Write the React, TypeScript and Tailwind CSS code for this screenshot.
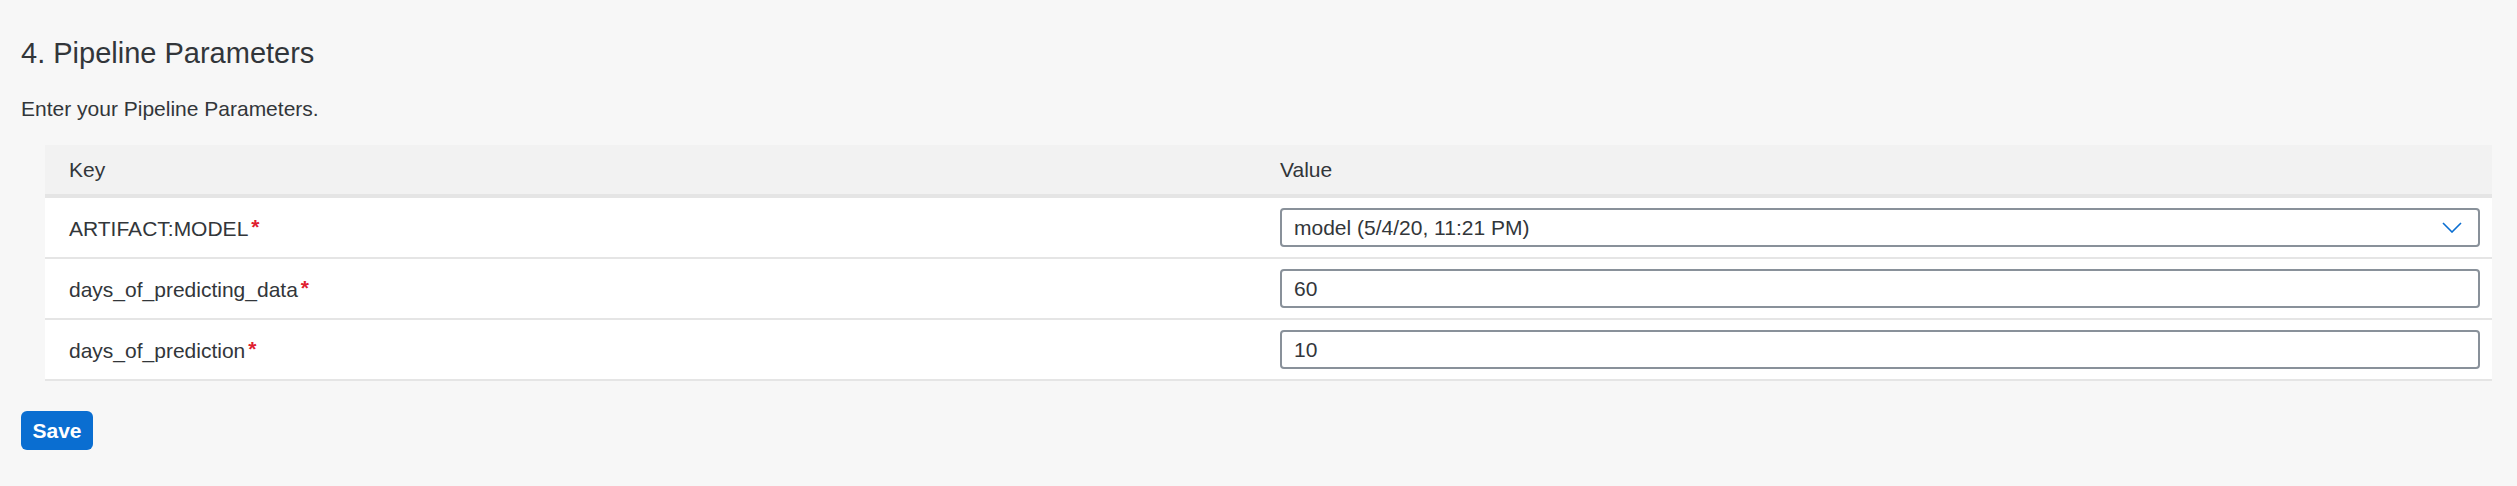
import React, { useState } from "react";

type Param = {
  key: string;
  value: string;
  kind: "select" | "input";
};

const params: Param[] = [
  { key: "ARTIFACT:MODEL", value: "model (5/4/20, 11:21 PM)", kind: "select" },
  { key: "days_of_predicting_data", value: "60", kind: "input" },
  { key: "days_of_prediction", value: "10", kind: "input" }
];

function Chevron() {
  return (
    <svg width="20" height="11" viewBox="0 0 20 11" fill="none">
      <path d="M1 1l9 9 9-9" stroke="#0a6ed1" strokeWidth="1.6" />
    </svg>
  );
}

export default function App() {
  const [values, setValues] = useState(params.map(p => p.value));

  return (
    <div className="min-h-screen bg-[#f7f7f7] px-[21px] text-[#32363a] font-['Liberation_Sans',Arial,sans-serif]">
      <h1 className="pt-[35px] text-[29px] leading-[36px] font-normal">4. Pipeline Parameters</h1>
      <p className="mt-[26px] text-[21px] leading-[24px]">Enter your Pipeline Parameters.</p>

      <div className="mt-[24px] ml-[24px] mr-[4px]">
        <div className="grid grid-cols-[1235px_1fr] h-[53px] bg-[#f2f2f2] border-b-4 border-[#e5e5e5] items-center text-[21px]">
          <div className="pl-6">Key</div>
          <div>Value</div>
        </div>

        {params.map((p, i) => (
          <div
            key={p.key}
            className="grid grid-cols-[1235px_1fr] h-[61px] bg-white border-b-2 border-[#e5e5e5] items-center text-[21px]"
          >
            <div className="pl-6">
              {p.key}
              <span className="ml-[3px] text-[#e0202f] font-bold align-[2px]">*</span>
            </div>
            <div className="pr-3">
              <div className="flex items-center h-[39px] rounded-[4px] border-2 border-[#89919a] bg-white pl-[12px] pr-[16px]">
                <input
                  className="flex-1 bg-transparent outline-none text-[21px] text-[#32363a]"
                  value={values[i]}
                  readOnly={p.kind === "select"}
                  onChange={e => setValues(prev => prev.map((v, j) => (j === i ? e.target.value : v)))}
                />
                {p.kind === "select" && <Chevron />}
              </div>
            </div>
          </div>
        ))}
      </div>

      <button className="block mt-[30px] w-[72px] h-[39px] rounded-[6px] bg-[#0a6ed1] text-white text-[21px] font-bold">
        Save
      </button>
    </div>
  );
}
